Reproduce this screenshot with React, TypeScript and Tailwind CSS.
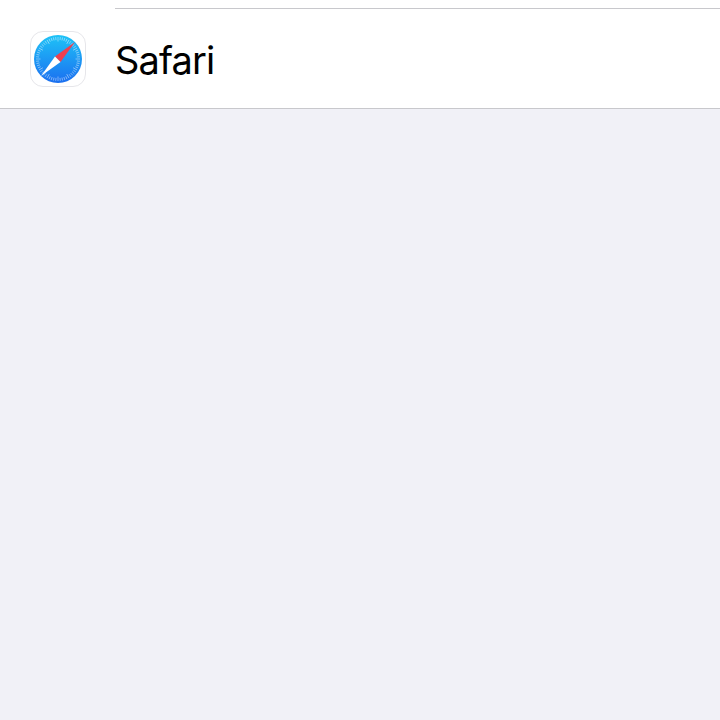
const ticks = Array.from({ length: 60 }, (_, i) => i * 6);

function SafariIcon() {
  return (
    <svg width="56" height="56" viewBox="0 0 56 56" className="block">
      <defs>
        <linearGradient id="dial" x1="0" y1="0" x2="0" y2="1">
          <stop offset="0" stopColor="#1ec3f7" />
          <stop offset="1" stopColor="#1b6ff0" />
        </linearGradient>
      </defs>
      <rect x="0.5" y="0.5" width="55" height="55" rx="12.5" fill="#fff" stroke="#e6e6ea" />
      <circle cx="28" cy="28" r="24" fill="url(#dial)" />
      {ticks.map((deg) => (
        <line
          key={deg}
          x1="28"
          y1="6"
          x2="28"
          y2={deg % 30 === 0 ? 10.5 : 9}
          stroke="#fff"
          strokeOpacity="0.7"
          strokeWidth="0.6"
          transform={`rotate(${deg} 28 28)`}
        />
      ))}
      <polygon points="45,11 25,25.5 30.5,31" fill="#ee3f50" />
      <polygon points="11,45 25,25.5 30.5,31" fill="#fff" />
    </svg>
  );
}

export default function App() {
  return (
    <div className="flex h-[720px] w-[720px] flex-col overflow-hidden bg-[#f1f1f7] font-['Inter','Liberation_Sans',sans-serif]">
      <div className="border-b border-[#c8c8cc] bg-white pb-[21px] pt-2">
        <div className="ml-[115px] h-px bg-[#c8c8cc]" />
        <div className="mt-[22px] flex items-center gap-[29px] pl-[30px]">
          <SafariIcon />
          <span className="box-border h-[56px] pt-px text-[38px] leading-[56px] tracking-[-0.9px] text-black">Safari</span>
        </div>
      </div>
    </div>
  );
}
